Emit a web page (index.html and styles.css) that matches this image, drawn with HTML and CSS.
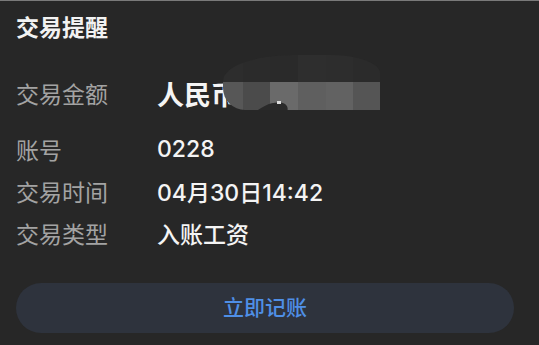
FILE: index.html
```html
<!DOCTYPE html>
<html lang="zh-CN">
<head>
<meta charset="UTF-8">
<title>交易提醒</title>
<link rel="stylesheet" href="styles.css">
</head>
<body>
<div class="card">
    <h2 class="title">交易提醒</h2>
    <div class="row row-amount">
        <span class="label">交易金额</span>
        <span class="value amount">人民币</span>
        <div class="mosaic">
            <i class="m1"></i><i class="m2"></i><i class="m3"></i><i class="m4"></i><i class="m5"></i><i class="m6"></i>
            <i class="m7"></i><i class="m8"></i><i class="m9"></i><i class="m10"></i><i class="m11"></i><i class="m12"></i>
            <b class="blob"></b>
            <b class="tick"></b>
        </div>
    </div>
    <div class="row row-first">
        <span class="label">账号</span>
        <span class="value">0228</span>
    </div>
    <div class="row">
        <span class="label">交易时间</span>
        <span class="value">04月30日14:42</span>
    </div>
    <div class="row">
        <span class="label">交易类型</span>
        <span class="value">入账工资</span>
    </div>
    <a class="btn" href="javascript:;">立即记账</a>
</div>
</body>
</html>
```

FILE: styles.css
```css
html,body{margin:0;padding:0;overflow:hidden;}
body{background:#272727;color:#fff;font-family:Inter,"Noto Sans CJK SC",sans-serif;border-top:1px solid #7a7a7a;height:344px;}
.card{padding:0 25px 0 16px;}
.title{margin:0;height:54px;line-height:54px;font-size:23px;font-weight:700;color:#f2f2f2;}
.row{display:flex;align-items:center;height:42px;font-size:23px;position:relative;}
.row-amount{margin-top:17px;}
.row-first{margin-top:14px;}
.label{width:141px;flex:none;color:#a3a3a3;}
.value{color:#f4f4f4;font-weight:500;}
.amount{font-size:27px;font-weight:700;}

.mosaic{position:absolute;left:207px;top:-17px;width:157px;height:55px;display:grid;grid-template-columns:20px 27px 28px 28px 27px 27px;grid-template-rows:27px 28px;overflow:hidden;border-radius:70px 50px 0 22px / 26px 18px 0 22px;}
.mosaic i{display:block;}
.m1{background:#2d2d2d;}
.m2{background:#2b2b2b;}
.m3{background:#2a2a2a;}
.m4{background:#2e2e2e;}
.m5{background:#2d2d2d;}
.m6{background:#2b2b2b;}
.m7{background:#575757;}
.m8{background:#4b4b4b;}
.m9{background:#6a6a6a;}
.m10{background:#5f5f5f;}
.m11{background:#626262;}
.m12{background:#555;}
.blob{position:absolute;left:26px;top:50px;width:40px;height:20px;border-radius:50%;background:#2a2a2a;transform:rotate(-25deg);}
.tick{position:absolute;left:54px;top:46px;width:4px;height:3px;background:#ddd;}

.btn{display:block;margin-top:29px;height:50px;line-height:50px;border-radius:25px;background:#2e333d;color:#4f8fe6;text-align:center;font-size:21px;font-weight:500;text-decoration:none;}
```
